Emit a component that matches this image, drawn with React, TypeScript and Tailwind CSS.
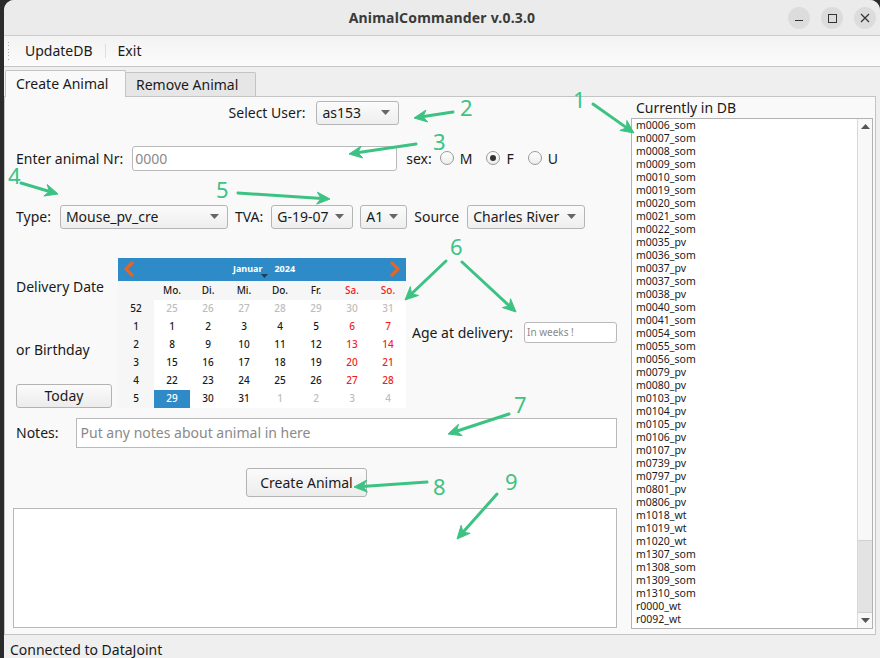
import React from "react";

const G = "#3cc383";
const FONT = { fontFamily: '"Noto Sans", "Open Sans", sans-serif' };

function Arrow({ x1, y1, x2, y2 }: { x1: number; y1: number; x2: number; y2: number }) {
  const a = Math.atan2(y2 - y1, x2 - x1);
  const c = Math.cos(a), s = Math.sin(a);
  const L = 13, W = 6;
  const bx = x2 - L * c, by = y2 - L * s;
  const px = -s, py = c;
  const pts = `${x2},${y2} ${bx + W * px},${by + W * py} ${x2 - 9 * c},${y2 - 9 * s} ${bx - W * px},${by - W * py}`;
  return (
    <g>
      <line x1={x1} y1={y1} x2={x2 - 8 * c} y2={y2 - 8 * s} stroke={G} strokeWidth={3} strokeLinecap="round" />
      <polygon points={pts} fill={G} stroke={G} strokeWidth={1} strokeLinejoin="round" />
    </g>
  );
}

function Num({ x, y, t }: { x: number; y: number; t: string }) {
  return (
    <text x={x} y={y} fill={G} fontSize={22} fontFamily='"Noto Sans", sans-serif'>
      {t}
    </text>
  );
}

function Combo({ w, text }: { w: number; text: string }) {
  return (
    <div
      className="h-[24px] flex items-center justify-between pl-[5px] pr-[8px] border border-[#b5b5b5] rounded-[3px] bg-gradient-to-b from-[#fbfbfb] to-[#eeeeee] text-[14px] text-[#1a1a1a]"
      style={{ width: w }}
    >
      <span>{text}</span>
      <svg width="9" height="5" viewBox="0 0 9 5">
        <polygon points="0,0 9,0 4.5,5" fill="#666" />
      </svg>
    </div>
  );
}

function Radio({ checked, label }: { checked?: boolean; label: string }) {
  return (
    <div className="flex items-center gap-[6px]">
      <div className="w-[14px] h-[14px] rounded-full border border-[#9a9a9a] bg-gradient-to-b from-[#ffffff] to-[#ececec] flex items-center justify-center">
        {checked && <div className="w-[6px] h-[6px] rounded-full bg-[#333]" />}
      </div>
      <span className="text-[14px]">{label}</span>
    </div>
  );
}

const items = [
  "m0006_som", "m0007_som", "m0008_som", "m0009_som", "m0010_som", "m0019_som", "m0020_som", "m0021_som",
  "m0022_som", "m0035_pv", "m0036_som", "m0037_pv", "m0037_som", "m0038_pv", "m0040_som", "m0041_som",
  "m0054_som", "m0055_som", "m0056_som", "m0079_pv", "m0080_pv", "m0103_pv", "m0104_pv", "m0105_pv",
  "m0106_pv", "m0107_pv", "m0739_pv", "m0797_pv", "m0801_pv", "m0806_pv", "m1018_wt", "m1019_wt",
  "m1020_wt", "m1307_som", "m1308_som", "m1309_som", "m1310_som", "r0000_wt", "r0092_wt",
];

const weeks: { wk: string; days: { d: string; other?: boolean }[] }[] = [
  { wk: "52", days: ["25", "26", "27", "28", "29", "30", "31"].map((d) => ({ d, other: true })) },
  { wk: "1", days: ["1", "2", "3", "4", "5", "6", "7"].map((d) => ({ d })) },
  { wk: "2", days: ["8", "9", "10", "11", "12", "13", "14"].map((d) => ({ d })) },
  { wk: "3", days: ["15", "16", "17", "18", "19", "20", "21"].map((d) => ({ d })) },
  { wk: "4", days: ["22", "23", "24", "25", "26", "27", "28"].map((d) => ({ d })) },
  {
    wk: "5",
    days: [{ d: "29" }, { d: "30" }, { d: "31" }, { d: "1", other: true }, { d: "2", other: true }, { d: "3", other: true }, { d: "4", other: true }],
  },
];

function Calendar() {
  const names = ["Mo.", "Di.", "Mi.", "Do.", "Fr.", "Sa.", "So."];
  return (
    <div className="w-[288px] h-[150px] flex flex-col text-[10px] font-medium">
      <div className="h-[23px] bg-[#2f8bc7] flex items-center justify-between px-[4px]">
        <svg width="14" height="16" viewBox="0 0 14 16">
          <path d="M10 2 L4 8 L10 14" stroke="#e0662a" strokeWidth="3.2" fill="none" strokeLinecap="round" strokeLinejoin="round" />
        </svg>
        <div className="flex items-center gap-[12px] text-white font-bold text-[9px] ml-[4px]">
          <span className="relative">
            Januar
            <svg className="absolute left-[28px] top-[12px]" width="7" height="4" viewBox="0 0 7 4">
              <polygon points="0,0 7,0 3.5,4" fill="#1d3c55" />
            </svg>
          </span>
          <span>2024</span>
        </div>
        <svg width="14" height="16" viewBox="0 0 14 16">
          <path d="M4 2 L10 8 L4 14" stroke="#e0662a" strokeWidth="3.2" fill="none" strokeLinecap="round" strokeLinejoin="round" />
        </svg>
      </div>
      <div className="h-[19px] flex bg-[#f6f6f6]">
        <div className="w-[36px]" />
        {names.map((n, i) => (
          <div key={n} className={`w-[36px] flex items-center justify-center ${i >= 5 ? "text-[#f01e1e]" : "text-[#1a1a1a]"}`}>
            {n}
          </div>
        ))}
      </div>
      {weeks.map((w) => (
        <div key={w.wk} className="h-[18px] flex">
          <div className="w-[36px] bg-[#f6f6f6] flex items-center justify-center text-[#1a1a1a]">{w.wk}</div>
          {w.days.map((d, i) => {
            const sel = w.wk === "5" && d.d === "29";
            const color = sel ? "text-white" : d.other ? "text-[#bdbdbd]" : i >= 5 ? "text-[#f01e1e]" : "text-[#1a1a1a]";
            return (
              <div key={i} className={`w-[36px] flex items-center justify-center ${sel ? "bg-[#2f8bc7]" : "bg-white"} ${color}`}>
                {d.d}
              </div>
            );
          })}
        </div>
      ))}
    </div>
  );
}

export default function App() {
  return (
    <div className="w-[880px] h-[658px] bg-[#2b2b2b] relative overflow-hidden flex text-[#1a1a1a]" style={FONT}>
      <div className="w-[4px]" />
      <div className="flex-1 flex flex-col bg-[#efefef] rounded-t-[10px] overflow-hidden">
        {/* title bar */}
        <div className="h-[36px] bg-[#ebebeb] border-b border-[#cdcdcd] relative flex items-center justify-center">
          <span className="font-bold text-[14px] text-[#3a3a3a] tracking-[0.2px]">AnimalCommander v.0.3.0</span>
          <div className="absolute right-[4px] top-[7px] flex gap-[11px]">
            <div className="w-[22px] h-[22px] rounded-full bg-[#dcdcdc] flex items-center justify-center">
              <div className="w-[8px] h-[1.5px] bg-[#333] mt-[5px]" />
            </div>
            <div className="w-[22px] h-[22px] rounded-full bg-[#dcdcdc] flex items-center justify-center">
              <div className="w-[9px] h-[9px] border border-[#333]" />
            </div>
            <div className="w-[22px] h-[22px] rounded-full bg-[#dcdcdc] flex items-center justify-center">
              <svg width="10" height="10" viewBox="0 0 10 10">
                <path d="M1 1 L9 9 M9 1 L1 9" stroke="#333" strokeWidth="1.2" />
              </svg>
            </div>
          </div>
        </div>
        {/* menu bar */}
        <div className="h-[31px] bg-gradient-to-b from-[#f3f3f3] to-[#fbfbfb] border-b border-[#c6c6c6] flex items-center text-[14px]">
          <div className="ml-[4px] w-[4px] h-[18px] flex flex-col justify-between">
            {Array.from({ length: 6 }).map((_, i) => (
              <div key={i} className="w-[1px] h-[1px] bg-[#b0b0b0]" />
            ))}
          </div>
          <span className="ml-[13px]">UpdateDB</span>
          <div className="ml-[12px] w-[1px] h-[14px] bg-[#dedede]" />
          <span className="ml-[12px]">Exit</span>
        </div>
        {/* tabs */}
        <div className="h-[29px] flex items-end pl-[1px]">
          <div className="h-[27px] w-[121px] bg-[#f9f9f9] border border-b-0 border-[#c4c4c4] rounded-t-[2px] text-[14px] flex items-center pl-[10px] relative top-[1px] z-10">
            Create Animal
          </div>
          <div className="h-[24px] w-[130px] bg-[#e6e6e6] border border-b-0 border-l-0 border-[#c4c4c4] rounded-tr-[2px] text-[14px] flex items-center pl-[10px]">
            Remove Animal
          </div>
        </div>
        {/* panel */}
        <div className="h-[542px] mr-[4px] bg-[#f9f9f9] border border-[#c4c4c4] flex">
          {/* left column */}
          <div className="w-[618px] flex flex-col">
            <div className="mt-[4px] h-[24px] flex items-center justify-center gap-[11px] text-[14px]">
              <span>Select User:</span>
              <Combo w={83} text="as153" />
            </div>
            <div className="mt-[21px] h-[25px] flex items-center text-[14px] pl-[11px]">
              <span>Enter animal Nr:</span>
              <div className="ml-[9px] w-[265px] h-[25px] bg-white border border-[#b9b9b9] rounded-[3px] flex items-center pl-[2px] text-[#8a8a8a]">
                0000
              </div>
              <span className="ml-[9px]">sex:</span>
              <div className="ml-[8px] flex items-center gap-[14px]">
                <Radio label="M" />
                <Radio label="F" checked />
                <Radio label="U" />
              </div>
            </div>
            <div className="mt-[34px] h-[24px] flex items-center text-[14px] pl-[11px]">
              <span>Type:</span>
              <div className="ml-[9px]">
                <Combo w={168} text="Mouse_pv_cre" />
              </div>
              <span className="ml-[7px]">TVA:</span>
              <div className="ml-[8px]">
                <Combo w={82} text="G-19-07" />
              </div>
              <div className="ml-[7px]">
                <Combo w={47} text="A1" />
              </div>
              <span className="ml-[7px]">Source</span>
              <div className="ml-[8px]">
                <Combo w={118} text="Charles River" />
              </div>
            </div>
            <div className="mt-[29px] h-[150px] flex text-[14px] pl-[11px]">
              <div className="w-[96px] flex flex-col">
                <span className="mt-[19px] leading-[20px]">Delivery Date</span>
                <span className="mt-[43px] leading-[20px]">or Birthday</span>
                <div className="mt-[24px] h-[24px] w-[96px] border border-[#b3b3b3] rounded-[3px] bg-gradient-to-b from-[#fbfbfb] to-[#ececec] flex items-center justify-center">
                  Today
                </div>
              </div>
              <div className="ml-[6px]">
                <Calendar />
              </div>
              <div className="ml-[6px] flex flex-col">
                <div className="mt-[64px] h-[21px] flex items-center">
                  <span>Age at delivery:</span>
                  <div className="ml-[11px] w-[93px] h-[21px] bg-white border border-[#b9b9b9] rounded-[3px] flex items-center pl-[2px] text-[10px] text-[#8a8a8a]">
                    In weeks !
                  </div>
                </div>
              </div>
            </div>
            <div className="mt-[10px] h-[30px] flex items-center text-[14px] pl-[11px]">
              <span>Notes:</span>
              <div className="ml-[17px] w-[541px] h-[30px] bg-white border border-[#b9b9b9] flex items-center pl-[4px] text-[#8a8a8a]">
                Put any notes about animal in here
              </div>
            </div>
            <div className="mt-[20px] h-[29px] flex pl-[241px]">
              <div className="w-[121px] h-[29px] border border-[#b3b3b3] rounded-[3px] bg-gradient-to-b from-[#fbfbfb] to-[#ececec] flex items-center justify-center text-[14px]">
                Create Animal
              </div>
            </div>
            <div className="mt-[11px] ml-[8px] w-[604px] h-[120px] bg-white border border-[#b9b9b9]" />
          </div>
          {/* right column */}
          <div className="flex-1 flex flex-col">
            <div className="mt-[2px] ml-[13px] h-[17px] text-[14px] leading-[17px]">Currently in DB</div>
            <div className="mt-[2px] ml-[8px] w-[242px] h-[511px] bg-white border border-[#b3b3b3] flex">
              <div className="flex-1 pl-[4px] text-[10.5px] leading-[13px] overflow-hidden">
                {items.map((it) => (
                  <div key={it} className="h-[13px]">{it}</div>
                ))}
              </div>
              <div className="w-[15px] border-l border-[#d8d8d8] flex flex-col bg-[#f8f8f8]">
                <div className="h-[15px] flex items-center justify-center">
                  <svg width="9" height="5" viewBox="0 0 9 5">
                    <polygon points="0,5 9,5 4.5,0" fill="#555" />
                  </svg>
                </div>
                <div className="flex-1" />
                <div className="h-[73px] bg-[#e3e3e3] border-y border-[#d0d0d0]" />
                <div className="h-[15px] flex items-center justify-center">
                  <svg width="9" height="5" viewBox="0 0 9 5">
                    <polygon points="0,0 9,0 4.5,5" fill="#555" />
                  </svg>
                </div>
              </div>
            </div>
          </div>
        </div>
        {/* status bar */}
        <div className="flex-1 flex items-start pl-[6px] pt-[7px] text-[14px] leading-[16px]">Connected to DataJoint</div>
      </div>

      {/* annotations */}
      <svg className="absolute left-0 top-0 pointer-events-none" width="880" height="658" viewBox="0 0 880 658">
        <Num x={573} y={108} t="1" />
        <Arrow x1={593} y1={104} x2={634} y2={133} />
        <Num x={460} y={116} t="2" />
        <Arrow x1={453} y1={112} x2={414} y2={118} />
        <Num x={433} y={150} t="3" />
        <Arrow x1={416} y1={144} x2={349} y2={154} />
        <Num x={8} y={184} t="4" />
        <Arrow x1={21} y1={183} x2={58} y2={194} />
        <Num x={216} y={198} t="5" />
        <Arrow x1={238} y1={193} x2={330} y2={199} />
        <Num x={450} y={255} t="6" />
        <Arrow x1={446} y1={261} x2={405} y2={300} />
        <Arrow x1={462} y1={262} x2={516} y2={312} />
        <Num x={514} y={413} t="7" />
        <Arrow x1={509} y1={414} x2={448} y2={434} />
        <Num x={433} y={495} t="8" />
        <Arrow x1={427} y1={482} x2={354} y2={487} />
        <Num x={505} y={490} t="9" />
        <Arrow x1={497} y1={494} x2={457} y2={539} />
      </svg>
    </div>
  );
}
